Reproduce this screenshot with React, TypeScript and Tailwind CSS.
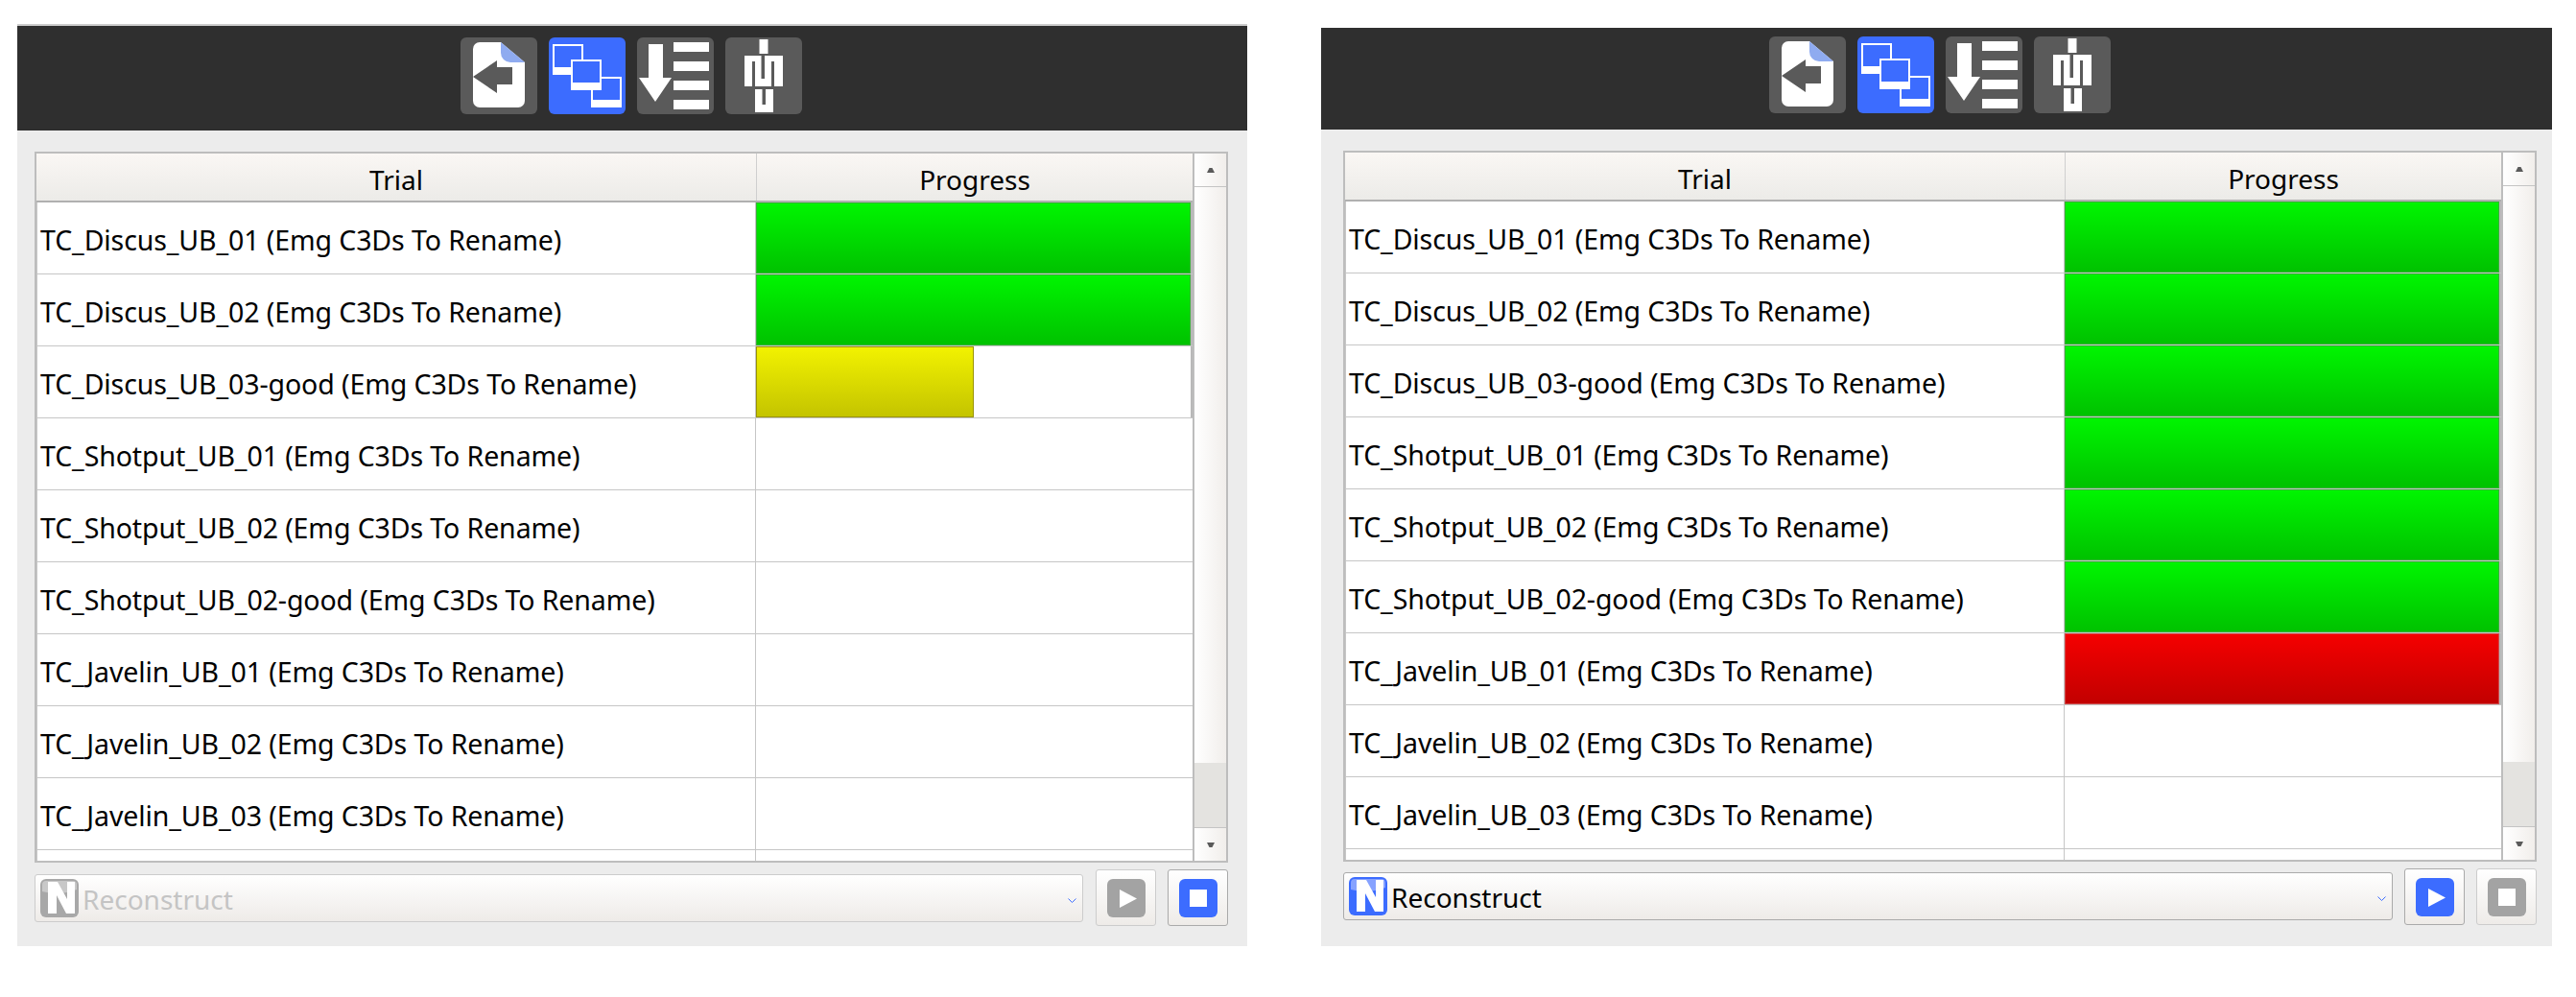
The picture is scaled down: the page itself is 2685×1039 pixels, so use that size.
const TRIALS = [
  "TC_Discus_UB_01",
  "TC_Discus_UB_02",
  "TC_Discus_UB_03-good",
  "TC_Shotput_UB_01",
  "TC_Shotput_UB_02",
  "TC_Shotput_UB_02-good",
  "TC_Javelin_UB_01",
  "TC_Javelin_UB_02",
  "TC_Javelin_UB_03",
];

type Bar = { progress: number; fill: string } | null;

const green = "bg-gradient-to-b from-[#00f500] to-[#00c200] border-[#35b335]";
const yellow = "bg-gradient-to-b from-[#f2f200] to-[#c4c400] border-[#9a9400]";
const red = "bg-gradient-to-b from-[#f50000] to-[#c20000] border-[#d04a4a]";

const LEFT_BARS: Bar[] = [
  { progress: 100, fill: green },
  { progress: 100, fill: green },
  { progress: 50, fill: yellow },
  null,
  null,
  null,
  null,
  null,
  null,
];

const RIGHT_BARS: Bar[] = [
  { progress: 100, fill: green },
  { progress: 100, fill: green },
  { progress: 100, fill: green },
  { progress: 100, fill: green },
  { progress: 100, fill: green },
  { progress: 100, fill: green },
  { progress: 100, fill: red },
  null,
  null,
];

function BackIcon() {
  return (
    <svg width="80" height="80" viewBox="0 0 80 80">
      <path d="M20 5H42L67 26V66a7 7 0 0 1-7 7H20a7 7 0 0 1-7-7V12a7 7 0 0 1 7-7Z" fill="#fff" />
      <path d="M42 5L67 26H52a10 10 0 0 1-10-10Z" fill="#8fabf0" />
      <path d="M13 41L38 24V31H54V49H38V58Z" fill="#5a5a5a" />
    </svg>
  );
}

function WindowsIcon() {
  return (
    <svg width="80" height="80" viewBox="0 0 80 80">
      <rect x="4" y="7" width="32" height="32" fill="#fff" />
      <rect x="6" y="9" width="28" height="22" fill="#3c6cff" />
      <rect x="44" y="41" width="32" height="32" fill="#fff" />
      <rect x="46" y="43" width="28" height="22" fill="#3c6cff" />
      <rect x="23" y="23" width="32" height="32" fill="#fff" />
      <rect x="25" y="25" width="28" height="22" fill="#3c6cff" />
    </svg>
  );
}

function SortIcon() {
  return (
    <svg width="80" height="80" viewBox="0 0 80 80" fill="#fff">
      <path d="M12 7H27V42H36L19 67L2 42H12Z" />
      <rect x="38" y="5" width="37" height="10" />
      <rect x="38" y="25" width="37" height="10" />
      <rect x="38" y="45" width="37" height="10" />
      <rect x="38" y="65" width="37" height="10" />
    </svg>
  );
}

function FigureIcon() {
  return (
    <svg width="80" height="80" viewBox="0 0 80 80">
      <rect x="35.5" y="2" width="9" height="15" fill="#fff" />
      <rect x="20" y="19" width="40" height="32" fill="#fff" />
      <rect x="28" y="25" width="3" height="26" fill="#5a5a5a" />
      <rect x="48" y="25" width="3" height="26" fill="#5a5a5a" />
      <rect x="37.5" y="19" width="3.5" height="24" fill="#5a5a5a" />
      <rect x="31" y="54" width="19" height="24" fill="#fff" />
      <rect x="38.5" y="54" width="3.5" height="16" fill="#5a5a5a" />
    </svg>
  );
}

function NIcon({ bg, shine }: { bg: string; shine: string }) {
  return (
    <svg width="40" height="40" viewBox="0 0 40 40" className="shrink-0">
      <rect width="40" height="40" rx="6" fill={bg} />
      <path d="M2 6a4 4 0 0 1 4-4H34a4 4 0 0 1 4 4V11Q20 18 2 13Z" fill={shine} />
      <path d="M8 3H18L28 21V3H36V36H27L17 17V36H8Z" fill="#fff" />
    </svg>
  );
}

function TableRow({ name, bar }: { name: string; bar: Bar }) {
  return (
    <div className="flex h-[75px] shrink-0 border-b border-[#c6c6c6]">
      <div className="flex w-[749px] shrink-0 items-center whitespace-nowrap border-l border-[#c6c6c6] pl-[3px] pt-[4px] tracking-[-0.1px]">
        {name} (Emg C3Ds To Rename)
      </div>
      <div className="w-[456px] shrink-0 border-l border-[#c6c6c6]">
        {bar && (
          <div className="h-full w-[455px] border-r-2 border-[#b8b8b8] bg-white">
            <div
              className={`h-full border ${bar.fill}`}
              style={{ width: `${bar.progress}%` }}
            />
          </div>
        )}
      </div>
    </div>
  );
}

function ArrowUp() {
  return (
    <svg width="8" height="5" viewBox="0 0 8 5">
      <path d="M2.5 0H5.5L8 5H0Z" fill="#5a5a5a" />
    </svg>
  );
}

function ArrowDown() {
  return (
    <svg width="8" height="5" viewBox="0 0 8 5">
      <path d="M0 0H8L5.5 5H2.5Z" fill="#5a5a5a" />
    </svg>
  );
}

function TrialTable({ bars }: { bars: Bar[] }) {
  return (
    <div className="flex h-[741px] border-2 border-[#bdbdbd] bg-white">
      <div className="flex w-[1205px] shrink-0 flex-col overflow-hidden">
        <div className="flex h-[51px] shrink-0 border-b-2 border-[#b0b0b0] bg-gradient-to-b from-[#faf7f4] to-[#ecebe8] text-[28px]">
          <div className="flex w-[750px] items-center justify-center pt-[5px]">Trial</div>
          <div className="flex w-[455px] items-center justify-center border-l border-[#cfcfcf] pt-[5px]">
            Progress
          </div>
        </div>
        {TRIALS.map((name, i) => (
          <TableRow key={name} name={name} bar={bars[i]} />
        ))}
        <div className="flex flex-1">
          <div className="w-[749px] border-l border-[#c6c6c6]" />
          <div className="flex-1 border-l border-[#c6c6c6]" />
        </div>
      </div>
      <div className="flex flex-1 flex-col border-l-2 border-[#bdbdbd] bg-gradient-to-r from-white to-[#f1eeeb]">
        <div className="flex h-[35px] items-center justify-center border-b border-[#c4c4c4]">
          <ArrowUp />
        </div>
        <div className="flex-1" />
        <div className="h-[67px] bg-[#e4e3e0]" />
        <div className="flex h-[35px] items-center justify-center border-t border-[#c4c4c4]">
          <ArrowDown />
        </div>
      </div>
    </div>
  );
}

function ToolButton({ children, active }: { children: React.ReactNode; active?: boolean }) {
  return (
    <div className={`h-20 w-20 overflow-hidden rounded-md ${active ? "bg-[#3c6cff]" : "bg-[#5a5a5a]"}`}>
      {children}
    </div>
  );
}

function Toolbar({ className }: { className: string }) {
  return (
    <div className={`flex justify-center gap-3 bg-[#2f2f2f] ${className}`}>
      <ToolButton>
        <BackIcon />
      </ToolButton>
      <ToolButton active>
        <WindowsIcon />
      </ToolButton>
      <ToolButton>
        <SortIcon />
      </ToolButton>
      <ToolButton>
        <FigureIcon />
      </ToolButton>
    </div>
  );
}

function RunButton({ enabled, kind }: { enabled: boolean; kind: "play" | "stop" }) {
  return (
    <div
      className={`flex h-[59px] w-[63px] shrink-0 items-center justify-center rounded-[3px] border bg-gradient-to-b from-white to-[#eeebe8] ${
        enabled ? "border-[#aaaaaa]" : "border-[#cccccc]"
      }`}
    >
      <svg width="40" height="40" viewBox="0 0 40 40">
        <rect width="40" height="40" rx="6" fill={enabled ? "#3c6cff" : "#a3a3a3"} />
        {kind === "play" ? (
          <path d="M13 11L31 20.5L13 30Z" fill="#fff" />
        ) : (
          <rect x="11" y="11" width="18" height="18" fill="#fff" />
        )}
      </svg>
    </div>
  );
}

function Combo({ enabled, className }: { enabled: boolean; className: string }) {
  return (
    <div
      className={`relative flex h-[50px] flex-1 items-center gap-[4px] rounded-[3px] border bg-gradient-to-b from-white to-[#eeebe8] pl-[5px] text-[28px] ${className} ${
        enabled ? "border-[#aaaaaa] text-black" : "border-[#cccccc] text-[#c4c4c4]"
      }`}
    >
      <NIcon bg={enabled ? "#3c6cff" : "#a8a8a8"} shine={enabled ? "#86a2ff" : "#c8c8c8"} />
      <span className="pt-[2px]">Reconstruct</span>
      <svg className="absolute right-[6px] top-[24px]" width="9" height="5" viewBox="0 0 9 5">
        <path d="M0.5 0.5L4.5 4.5L8.5 0.5" fill="none" stroke="#3c6cff" />
      </svg>
    </div>
  );
}

export default function App() {
  return (
    <div className="flex min-h-[1039px] items-start bg-white pl-[18px] font-['Noto_Sans',sans-serif] text-[28.5px] text-black">
      <div className="mt-[25px] w-[1282px] border-t-2 border-[#cccccc]">
        <Toolbar className="h-[109px] pt-3 pr-[2px]" />
        <div className="h-[850px] bg-[#ececec] pl-[18px] pr-[20px] pt-[22px]">
          <TrialTable bars={LEFT_BARS} />
          <div className="mt-[7px] flex items-start gap-[12px]">
            <Combo enabled={false} className="mt-[5px] mr-[1px]" />
            <RunButton enabled={false} kind="play" />
            <RunButton enabled kind="stop" />
          </div>
        </div>
      </div>
      <div className="ml-[77px] mt-[29px] w-[1283px]">
        <Toolbar className="h-[106px] pt-[9px] pl-[7px]" />
        <div className="h-[851px] bg-[#ececec] pl-[23px] pr-[16px] pt-[22px]">
          <TrialTable bars={RIGHT_BARS} />
          <div className="mt-[7px] flex items-start gap-[12px]">
            <Combo enabled className="mt-[4px]" />
            <RunButton enabled kind="play" />
            <RunButton enabled={false} kind="stop" />
          </div>
        </div>
      </div>
    </div>
  );
}
